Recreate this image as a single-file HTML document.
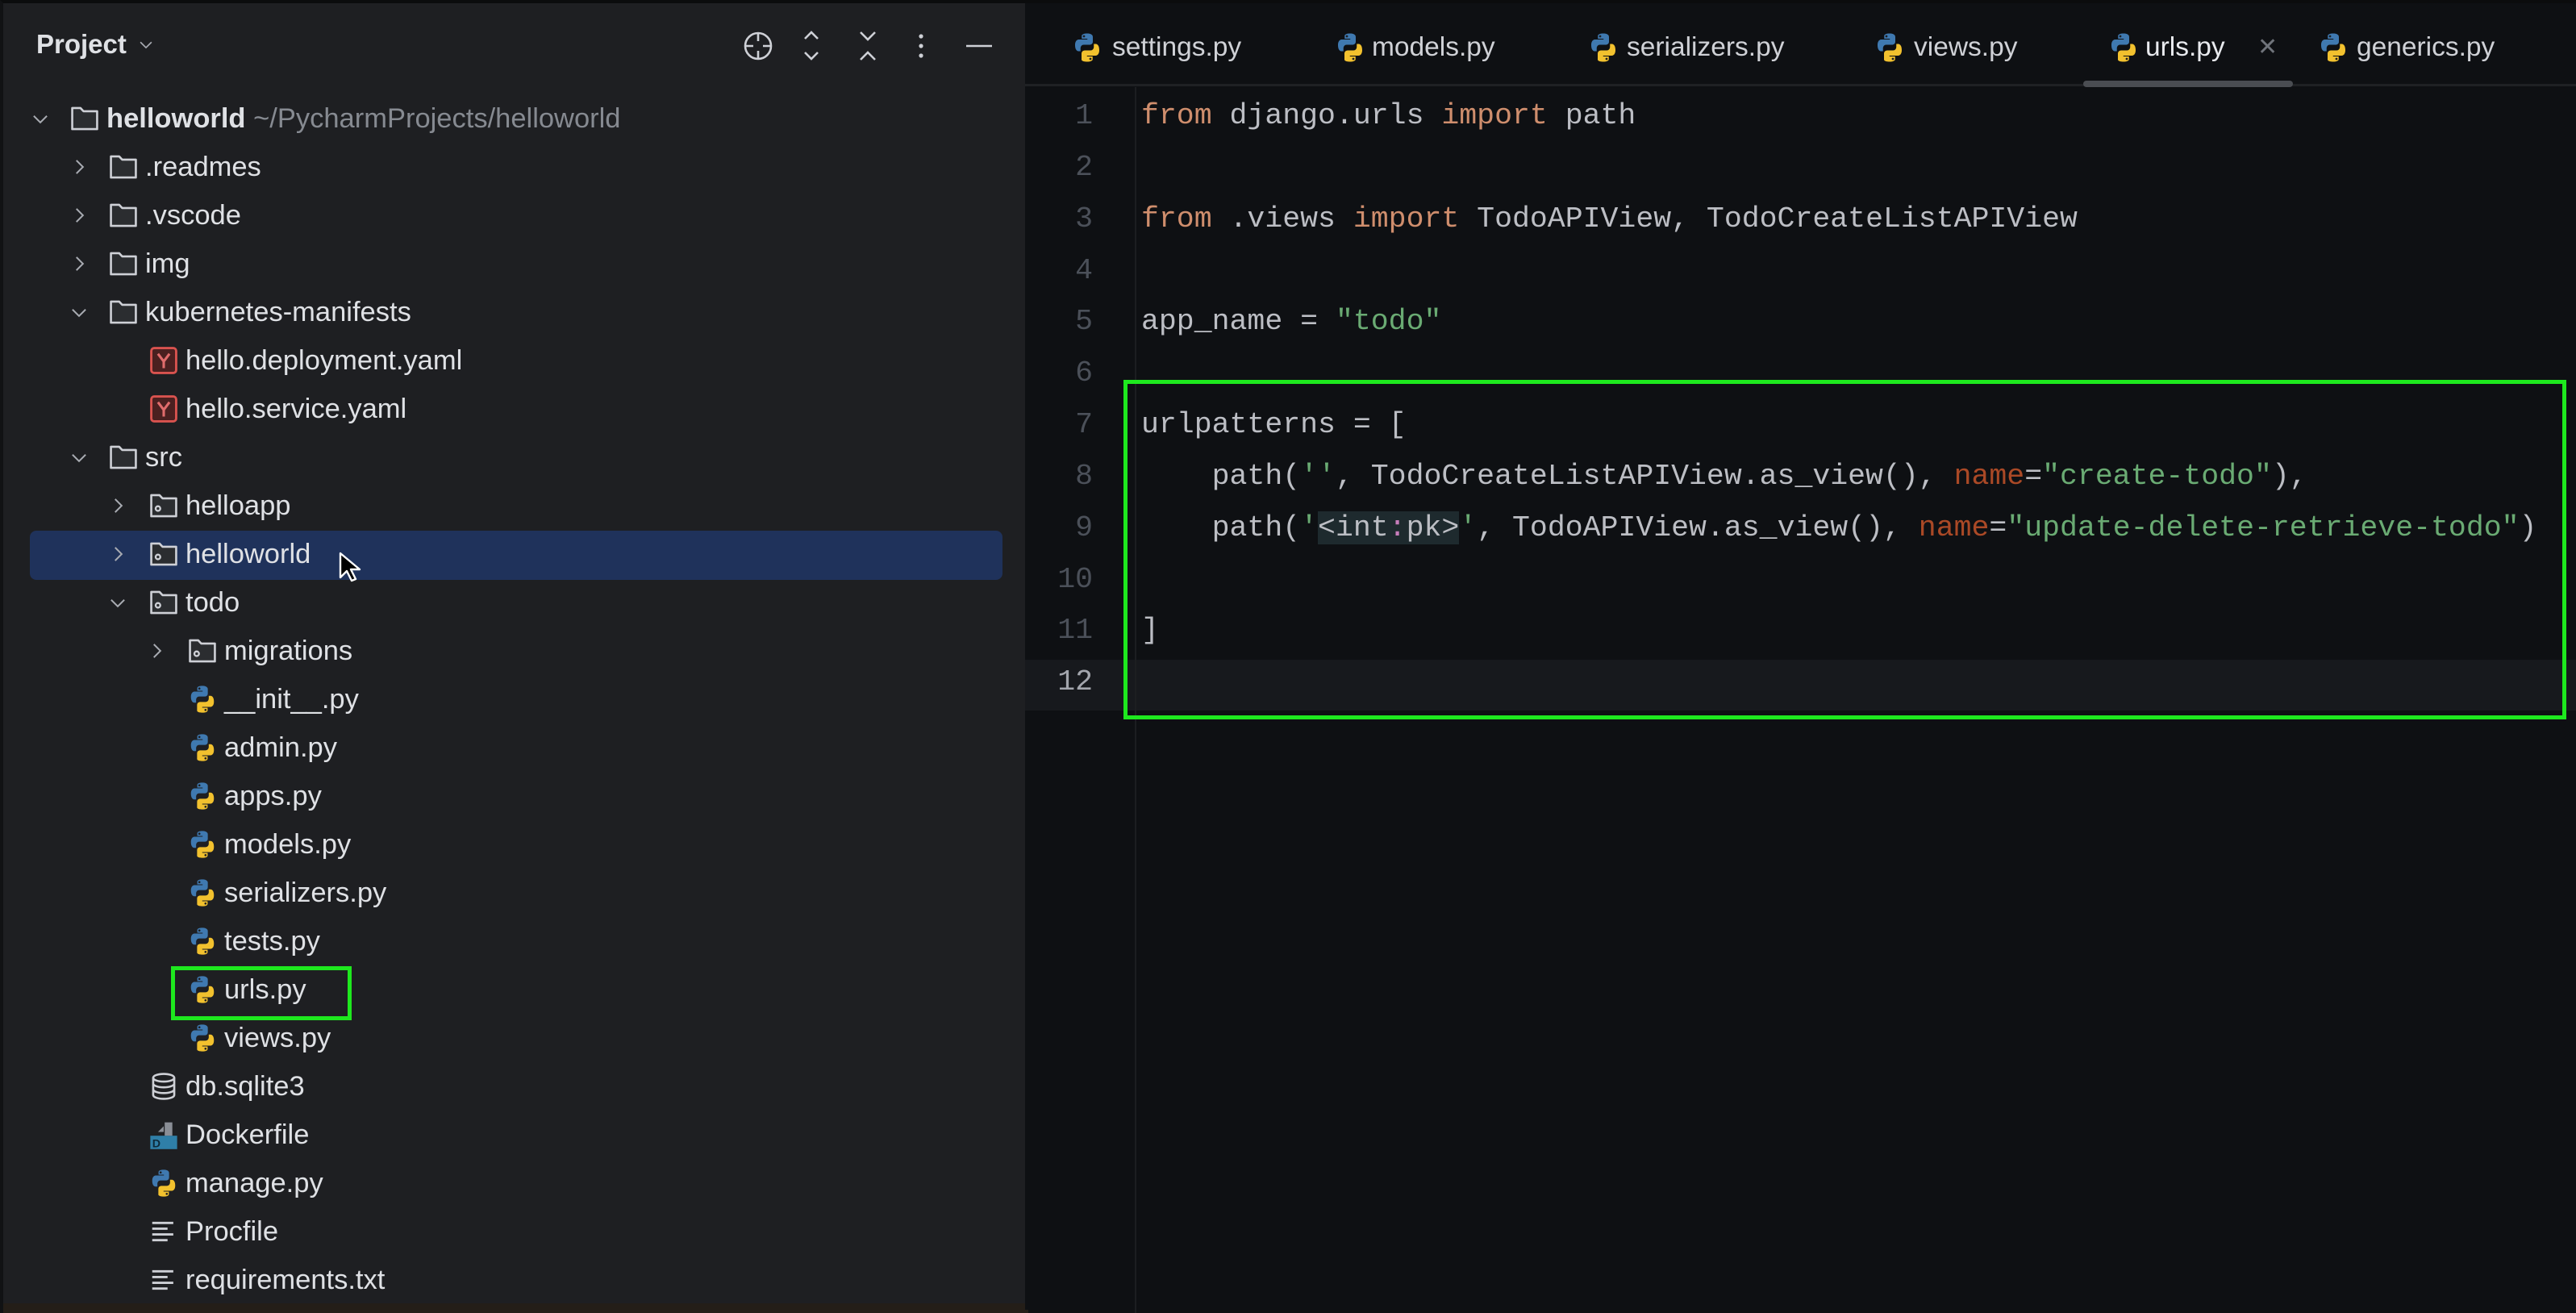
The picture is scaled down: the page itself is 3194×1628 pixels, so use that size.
<!DOCTYPE html>
<html><head><meta charset="utf-8"><style>
*{margin:0;padding:0;box-sizing:border-box}
body{width:3194px;height:1624px;background:#0f1113;position:relative;overflow:hidden;font-family:"Liberation Sans",sans-serif}
#side{position:absolute;left:0;top:0;width:1271px;height:1624px;background:#1e1f22;border-left:4px solid #111214;border-top:4px solid #0b0c0d}
#ed{position:absolute;left:1271px;top:0;width:1923px;height:1624px;background:#0e1013;border-top:4px solid #0b0c0d}
.row{position:absolute;height:60px;line-height:60px;font-size:34.5px;color:#dfe1e5;white-space:nowrap}
.ic{position:absolute;width:38px;height:38px;top:11px}
.ch{position:absolute;width:26px;height:26px;top:17px}
.mono{font-family:"Liberation Mono",monospace;font-size:36.5px;white-space:pre}
.tab{position:absolute;top:30px;height:50px;line-height:50px;font-size:33.5px;color:#cfd1d6}
.tab svg{position:absolute;left:-4px;top:5px;width:40px;height:40px}
.tab span{position:absolute;white-space:nowrap}
.kw{color:#cf8e6d}.s{color:#6aab73}.n{color:#aa4926}
</style></head><body>
<svg width="0" height="0" style="position:absolute">
<defs>
<symbol id="py" viewBox="0 0 16 16"><path d="M7.9 1C5.2 1 5.3 2.2 5.3 2.2V3.6h2.8V4H4S2 3.8 2 6.8s1.7 3 1.7 3h1V8.3s0-1.7 1.7-1.7h2.8s1.6 0 1.6-1.6V2.7S11 1 7.9 1z" fill="#3f79b0"/><circle cx="6.4" cy="2.4" r=".55" fill="#1e1f22"/><path d="M8.1 15c2.7 0 2.6-1.2 2.6-1.2V12.4H7.9V12H12s2 .2 2-2.8-1.7-3-1.7-3h-1v1.5s0 1.7-1.7 1.7H6.8s-1.6 0-1.6 1.6v2.9S5 15 8.1 15z" fill="#f2c12e"/><circle cx="9.6" cy="13.6" r=".55" fill="#1e1f22"/></symbol>
<symbol id="fd" viewBox="0 0 16 16"><path d="M1.5 2.5h4.3l1.6 1.7h7.1v9.3h-13z" fill="#2b2d30" stroke="#ced0d6" stroke-width="1.1" stroke-linejoin="round"/></symbol>
<symbol id="pk" viewBox="0 0 16 16"><path d="M1.5 2.5h4.3l1.6 1.7h7.1v9.3h-13z" fill="#2b2d30" stroke="#ced0d6" stroke-width="1.1" stroke-linejoin="round"/><circle cx="5" cy="9.5" r="1.2" fill="none" stroke="#ced0d6" stroke-width="1"/></symbol>
<symbol id="ym" viewBox="0 0 16 16"><rect x="1.5" y="1.5" width="13" height="13" rx="1.5" fill="#4a2020" stroke="#d9534f" stroke-width="1.2"/><path d="M5 4.5l3 4 3-4M8 8.5v3.5" fill="none" stroke="#e06c6c" stroke-width="1.3"/></symbol>
<symbol id="db" viewBox="0 0 16 16"><g fill="none" stroke="#ced0d6" stroke-width="1.1"><ellipse cx="8" cy="3.5" rx="5.5" ry="2"/><path d="M2.5 3.5v9c0 1.1 2.5 2 5.5 2s5.5-.9 5.5-2v-9M2.5 6.5c0 1.1 2.5 2 5.5 2s5.5-.9 5.5-2M2.5 9.5c0 1.1 2.5 2 5.5 2s5.5-.9 5.5-2"/></g></symbol>
<symbol id="dk" viewBox="0 0 16 16"><path d="M5 6.5L8 3.5V6.5zM8.5 1.5h4v7h-4z" fill="#8a8e96"/><rect x="1" y="8.5" width="14" height="7" fill="#2f7fa8"/><text x="2" y="14.6" font-size="6" font-weight="bold" fill="#0e2a3a" font-family="Liberation Sans">D</text></symbol>
<symbol id="tx" viewBox="0 0 16 16"><path d="M2 3.5h11M2 6.5h8M2 9.5h11M2 12.5h8" stroke="#ced0d6" stroke-width="1.2"/></symbol>
<symbol id="cr" viewBox="0 0 16 16"><path d="M6 3l5 5-5 5" fill="none" stroke="#a8abb2" stroke-width="1.2"/></symbol>
<symbol id="cd" viewBox="0 0 16 16"><path d="M3 6l5 5 5-5" fill="none" stroke="#a8abb2" stroke-width="1.2"/></symbol>
</defs></svg>

<div id="side">
<div style="position:absolute;left:41px;top:26px;font-size:33px;font-weight:bold;color:#dfe1e5;line-height:50px">Project</div>
<svg style="position:absolute;left:166px;top:40px" width="22" height="22"><use href="#cd"/></svg>
<svg style="position:absolute;left:900px;top:30px" width="340" height="50" fill="none" stroke="#ced0d6" stroke-width="2.6">
<circle cx="36" cy="23" r="16"/><path d="M36 7v10M36 29v10M20 23h10M42 23h10"/>
<path d="M94 14l8-8 8 8M94 31l8 8 8-8"/>
<path d="M163 6l9 9 9-9M163 40l9-9 9 9"/>
<circle cx="238" cy="11" r="2.6" fill="#ced0d6" stroke="none"/><circle cx="238" cy="23" r="2.6" fill="#ced0d6" stroke="none"/><circle cx="238" cy="35" r="2.6" fill="#ced0d6" stroke="none"/>
<path d="M294 23h32"/>
</svg>

<div style="position:absolute;left:33px;top:654px;width:1206px;height:61px;background:#1f325b;border-radius:8px"></div>

<div class="row" style="top:113px;left:0"><svg class="ch" style="left:33px"><use href="#cd"/></svg><svg class="ic" style="left:82px"><use href="#fd"/></svg><span style="position:absolute;left:128px"><b>helloworld</b> <span style="color:#868a91">~/PycharmProjects/helloworld</span></span></div>
<div class="row" style="top:173px"><svg class="ch" style="left:81px"><use href="#cr"/></svg><svg class="ic" style="left:130px"><use href="#fd"/></svg><span style="position:absolute;left:176px">.readmes</span></div>
<div class="row" style="top:233px"><svg class="ch" style="left:81px"><use href="#cr"/></svg><svg class="ic" style="left:130px"><use href="#fd"/></svg><span style="position:absolute;left:176px">.vscode</span></div>
<div class="row" style="top:293px"><svg class="ch" style="left:81px"><use href="#cr"/></svg><svg class="ic" style="left:130px"><use href="#fd"/></svg><span style="position:absolute;left:176px">img</span></div>
<div class="row" style="top:353px"><svg class="ch" style="left:81px"><use href="#cd"/></svg><svg class="ic" style="left:130px"><use href="#fd"/></svg><span style="position:absolute;left:176px">kubernetes-manifests</span></div>
<div class="row" style="top:413px"><svg class="ic" style="left:180px"><use href="#ym"/></svg><span style="position:absolute;left:226px">hello.deployment.yaml</span></div>
<div class="row" style="top:473px"><svg class="ic" style="left:180px"><use href="#ym"/></svg><span style="position:absolute;left:226px">hello.service.yaml</span></div>
<div class="row" style="top:533px"><svg class="ch" style="left:81px"><use href="#cd"/></svg><svg class="ic" style="left:130px"><use href="#fd"/></svg><span style="position:absolute;left:176px">src</span></div>
<div class="row" style="top:593px"><svg class="ch" style="left:129px"><use href="#cr"/></svg><svg class="ic" style="left:180px"><use href="#pk"/></svg><span style="position:absolute;left:226px">helloapp</span></div>
<div class="row" style="top:653px"><svg class="ch" style="left:129px"><use href="#cr"/></svg><svg class="ic" style="left:180px"><use href="#pk"/></svg><span style="position:absolute;left:226px">helloworld</span></div>
<div class="row" style="top:713px"><svg class="ch" style="left:129px"><use href="#cd"/></svg><svg class="ic" style="left:180px"><use href="#pk"/></svg><span style="position:absolute;left:226px">todo</span></div>
<div class="row" style="top:773px"><svg class="ch" style="left:177px"><use href="#cr"/></svg><svg class="ic" style="left:228px"><use href="#pk"/></svg><span style="position:absolute;left:274px">migrations</span></div>
<div class="row" style="top:833px"><svg class="ic" style="left:228px"><use href="#py"/></svg><span style="position:absolute;left:274px">__init__.py</span></div>
<div class="row" style="top:893px"><svg class="ic" style="left:228px"><use href="#py"/></svg><span style="position:absolute;left:274px">admin.py</span></div>
<div class="row" style="top:953px"><svg class="ic" style="left:228px"><use href="#py"/></svg><span style="position:absolute;left:274px">apps.py</span></div>
<div class="row" style="top:1013px"><svg class="ic" style="left:228px"><use href="#py"/></svg><span style="position:absolute;left:274px">models.py</span></div>
<div class="row" style="top:1073px"><svg class="ic" style="left:228px"><use href="#py"/></svg><span style="position:absolute;left:274px">serializers.py</span></div>
<div class="row" style="top:1133px"><svg class="ic" style="left:228px"><use href="#py"/></svg><span style="position:absolute;left:274px">tests.py</span></div>
<div class="row" style="top:1193px"><svg class="ic" style="left:228px"><use href="#py"/></svg><span style="position:absolute;left:274px">urls.py</span></div>
<div class="row" style="top:1253px"><svg class="ic" style="left:228px"><use href="#py"/></svg><span style="position:absolute;left:274px">views.py</span></div>
<div class="row" style="top:1313px"><svg class="ic" style="left:180px"><use href="#db"/></svg><span style="position:absolute;left:226px">db.sqlite3</span></div>
<div class="row" style="top:1373px"><svg class="ic" style="left:180px"><use href="#dk"/></svg><span style="position:absolute;left:226px">Dockerfile</span></div>
<div class="row" style="top:1433px"><svg class="ic" style="left:180px"><use href="#py"/></svg><span style="position:absolute;left:226px">manage.py</span></div>
<div class="row" style="top:1493px"><svg class="ic" style="left:180px"><use href="#tx"/></svg><span style="position:absolute;left:226px">Procfile</span></div>
<div class="row" style="top:1553px"><svg class="ic" style="left:180px"><use href="#tx"/></svg><span style="position:absolute;left:226px">requirements.txt</span></div>

<div style="position:absolute;left:208px;top:1194px;width:224px;height:67px;border:5px solid #1ee81e"></div>
<svg style="position:absolute;left:416px;top:680px" width="30" height="40" viewBox="0 0 15 20"><path d="M1 1v15l4-4 3 6 2.5-1-3-6h5.5z" fill="#000" stroke="#fff" stroke-width="1.2" stroke-linejoin="round"/></svg>
<div style="position:absolute;left:0;top:1612px;width:1271px;height:12px;background:#241e18"></div>
</div>

<div id="ed">
<div style="position:absolute;left:0;top:100px;width:1923px;height:3px;background:#1f2124"></div>
<div style="position:absolute;left:1312px;top:96px;width:260px;height:8px;border-radius:4px;background:#4a4d52"></div>
<div class="tab" style="left:61px"><svg><use href="#py"/></svg><span style="left:47px">settings.py</span></div>
<div class="tab" style="left:387px"><svg><use href="#py"/></svg><span style="left:43px">models.py</span></div>
<div class="tab" style="left:701px"><svg><use href="#py"/></svg><span style="left:45px">serializers.py</span></div>
<div class="tab" style="left:1056px"><svg><use href="#py"/></svg><span style="left:46px">views.py</span></div>
<div class="tab" style="left:1346px"><svg><use href="#py"/></svg><span style="left:43px;color:#e8eaee">urls.py</span><span style="left:182px;color:#6f737a;font-size:30px">✕</span></div>
<div class="tab" style="left:1606px"><svg><use href="#py"/></svg><span style="left:45px">generics.py</span></div>

<div style="position:absolute;left:0;top:814px;width:1923px;height:63px;background:#17191d"></div>
<div style="position:absolute;left:136px;top:104px;width:2px;height:1520px;background:#1c1e21"></div>

<div class="mono" style="position:absolute;left:0;top:108px;width:84px;line-height:63.85px;text-align:right;color:#4b5059">1
2
3
4
5
6
7
8
9
10
11
<span style="color:#a3a6ad">12</span></div>

<div class="mono" style="position:absolute;left:144px;top:108px;line-height:63.85px;color:#bcbec4"><span class="kw">from</span> django.urls <span class="kw">import</span> path

<span class="kw">from</span> .views <span class="kw">import</span> TodoAPIView, TodoCreateListAPIView

app_name = <span class="s">"todo"</span>

urlpatterns = [
    path(<span class="s">''</span>, TodoCreateListAPIView.as_view(), <span class="n">name</span>=<span class="s">"create-todo"</span>),
    path(<span class="s">'</span><span style="background:#1e2a2e">&lt;int<span style="color:#c77dbb">:</span>pk&gt;</span><span class="s">'</span>, TodoAPIView.as_view(), <span class="n">name</span>=<span class="s">"update-delete-retrieve-todo"</span>)

]</div>
<div style="position:absolute;left:122px;top:467px;width:1789px;height:421px;border:5px solid #1ee81e"></div>
</div>
</body></html>
